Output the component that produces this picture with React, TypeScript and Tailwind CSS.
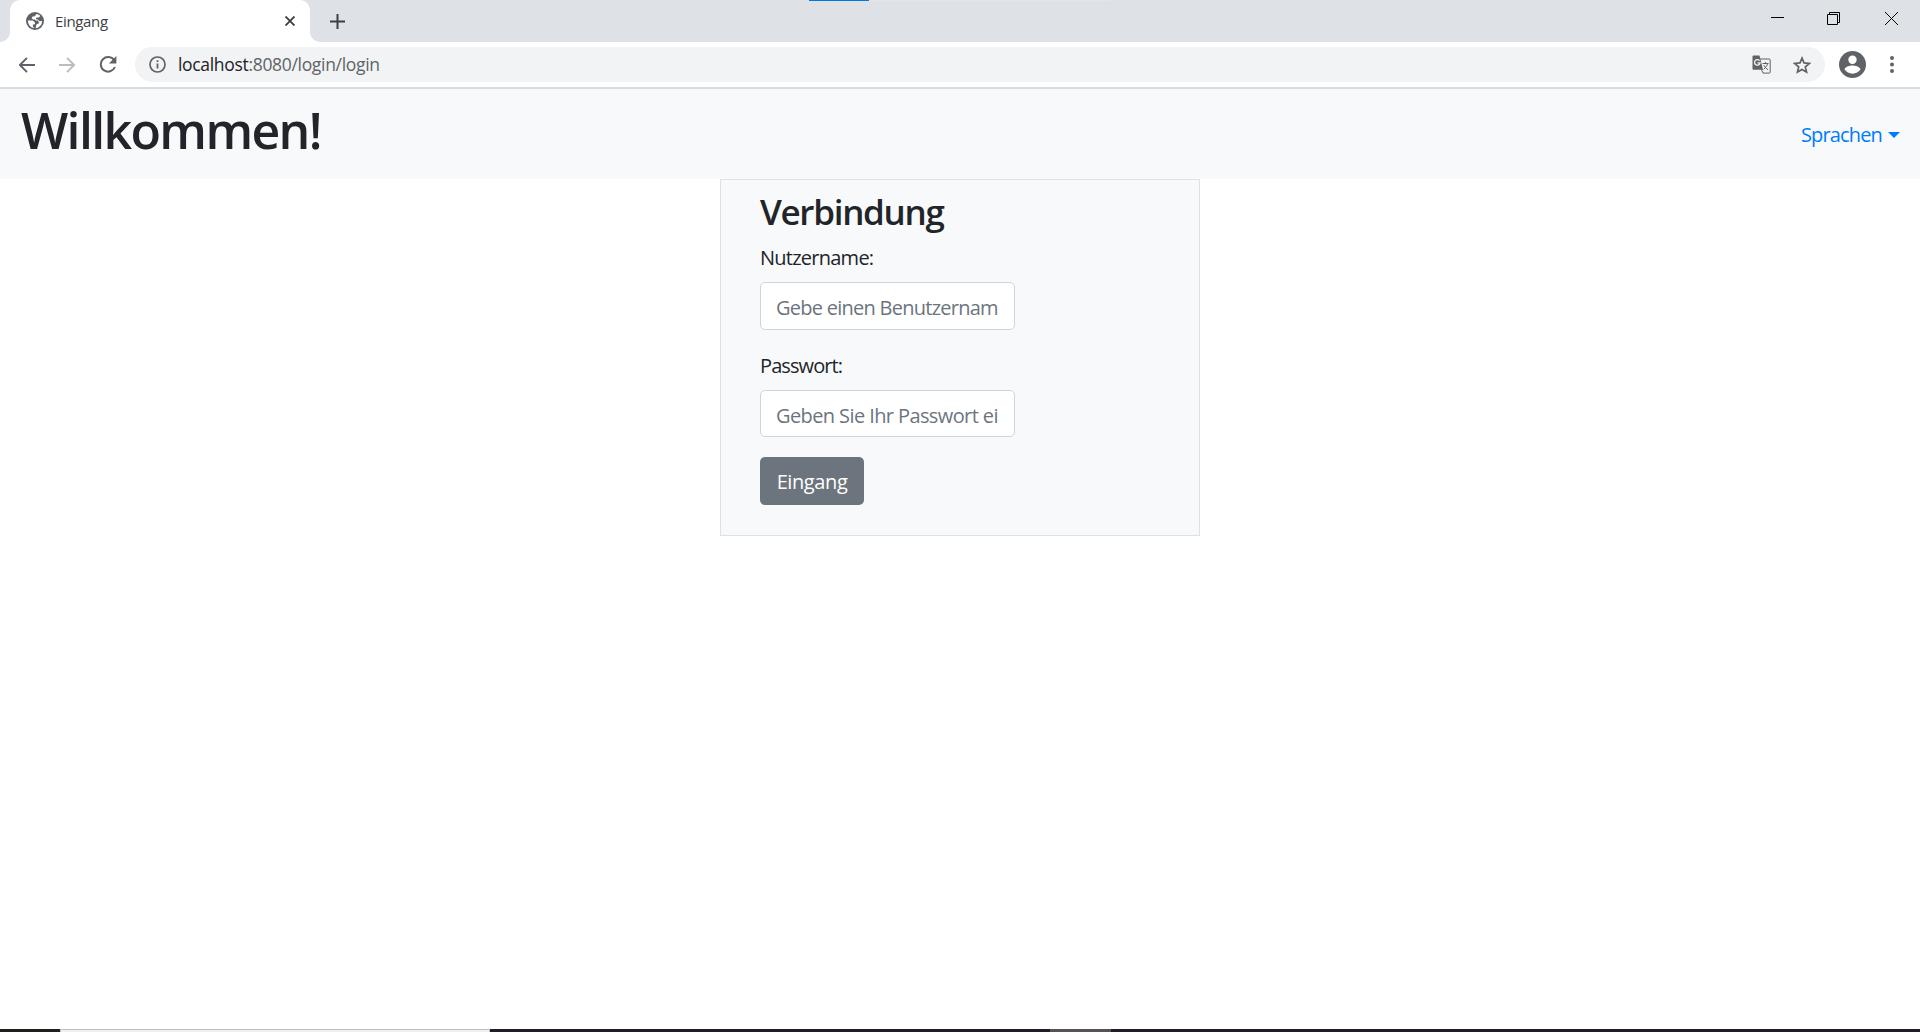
import React from "react";

const FONT = "font-['Open_Sans','Noto_Sans',sans-serif]";

function TabStrip() {
  return (
    <div className="relative flex h-[42px] bg-[#dee1e6]">
      <div className="flex w-[10px] bg-white">
        <div className="h-full w-[10px] rounded-br-[10px] bg-[#dee1e6]" />
      </div>
      <div className="flex w-[300px] items-center rounded-t-[10px] bg-white pl-4 pr-[15px]">
        <svg className="size-[18px]" viewBox="0 0 18 18">
          <circle cx="9" cy="9" r="9" fill="#5f6368" />
          <path d="M10.300 1.900 8.900 4.300 6.600 4.600 5.700 6.300 7 7.400h1.900l.7 1.200h2.200l1.100 1.500-.2 1.500-2 .7-.7 1.600-.3 2.300A7.200 7.200 0 0 0 16.100 9l-2.600.2-1.700-1.800-1.900-.2.300-1.500 3-.4 1.100-1.600A7.200 7.200 0 0 0 10.300 1.900Z" fill="#fff" />
          <path d="M1.900 8.600h4.700l2.300 1.600v2l-2 .3v2.100l1.500 1.500A7.200 7.200 0 0 1 1.900 8.600Z" fill="#fff" />
        </svg>
        <span className="-mt-px ml-[11px] flex-1 text-[15px] leading-5 tracking-[-0.35px] text-[#3c4043]">Eingang</span>
        <svg className="size-[10px]" viewBox="0 0 10 10" stroke="#3c4043" strokeWidth="1.9">
          <path d="M.5.5 9.5 9.5M9.5.5.5 9.5" />
        </svg>
      </div>
      <div className="flex flex-1 items-center justify-between bg-white">
        <div className="flex h-full flex-1 items-center rounded-bl-[10px] bg-[#dee1e6] pl-5">
          <svg className="size-[15px]" viewBox="0 0 15 15" stroke="#3c4043" strokeWidth="2">
            <path d="M7.5 0v15M0 7.5h15" />
          </svg>
          <div className="ml-auto flex h-[37px] items-center self-start pr-[22px]">
            <svg className="h-[13px] w-[13px]" viewBox="0 0 13 13" stroke="#000"><path d="M0 5.5h13" /></svg>
            <svg className="ml-[43px] size-[13px]" viewBox="0 0 13 13" fill="none" stroke="#000">
              <path d="M.5 2.5h10v10H.5zM2.5 2.5v-2h10v10h-2" />
            </svg>
            <svg className="ml-[45px] size-[13px]" viewBox="0 0 13 13" stroke="#000"><path d="m0 0 13 13M13 0 0 13" /></svg>
          </div>
        </div>
      </div>
      <div className="absolute left-[809px] top-0 flex h-px w-[301px] bg-[#e5e5e5]">
        <div className="w-[60px] bg-[#0078d7]" />
      </div>
    </div>
  );
}

function Toolbar() {
  return (
    <div className="flex h-[47px] items-center border-b-2 border-[#d9dbdf] bg-white pl-[19px] pr-[26px]">
      <svg className="size-4" viewBox="0 0 16 16" fill="none" stroke="#5f6368" strokeWidth="1.9"><path d="M16 8H1.5M8 .9.9 8 8 15.1" /></svg>
      <svg className="ml-6 size-4" viewBox="0 0 16 16" fill="none" stroke="#babcbe" strokeWidth="1.9"><path d="M0 8h14.5M8 .9 15.1 8 8 15.1" /></svg>
      <svg className="ml-6 size-[18px]" viewBox="0 0 18 18" fill="none">
        <path d="M15.2 4.3A7.3 7.3 0 1 0 15.9 11" stroke="#5f6368" strokeWidth="2" />
        <path d="M17.4 0v7.5H9.9Z" fill="#5f6368" />
      </svg>
      <div className="ml-[18px] flex h-[35px] flex-1 items-center rounded-full bg-[#f1f3f4] pl-[14px] pr-[14px]">
        <svg className="size-[17px]" viewBox="0 0 17 17" fill="none" stroke="#5f6368">
          <circle cx="8.5" cy="8.5" r="7.5" strokeWidth="1.7" />
          <path d="M8.5 7.6v5M8.5 4.2v1.9" strokeWidth="1.8" />
        </svg>
        <span className="-mt-px ml-3 flex-1 text-[17.5px] leading-6 tracking-[-0.32px] text-[#5f6368]"><span className="text-[#202124]">localhost</span>:8080/login/login</span>
        <svg className="size-[19px]" viewBox="0 0 19 19">
          <path d="M8 4h9.3c.5 0 .9.4.9.9v12.3c0 .5-.4.9-.9.9H11L9.3 14" fill="#f1f3f4" stroke="#5f6368" strokeWidth="1" />
          <path d="M1.500.5h6L11 14.700H1.500A1 1 0 0 1 .5 13.700V1.500A1 1 0 0 1 1.500.5Z" fill="#5f6368" />
          <path d="M7.600 5.700A2.800 2.800 0 1 0 8.100 7.900H5.500" fill="none" stroke="#f1f3f4" strokeWidth="1.300" />
          <path d="M10.500 8.500h6M13.400 7v1.500M15.600 8.500c-.5 2.500-2 4.300-4 5.700M11.700 10c1 2 2.500 3.500 4.300 4.800" fill="none" stroke="#5f6368" />
        </svg>
        <svg className="ml-[22px] size-[18px]" viewBox="0 0 18 18" fill="none" stroke="#5f6368" strokeWidth="1.700">
          <path d="m9 2.200 2 4.700 5.400.5-4.100 3.500 1.250 5.200L9 13.400l-4.550 2.700 1.250-5.200L1.600 7.400l5.400-.5Z" />
        </svg>
      </div>
      <svg className="ml-[14px] size-[27px]" viewBox="0 0 27 27">
        <circle cx="13.500" cy="13.500" r="13.500" fill="#5f6368" />
        <circle cx="13.500" cy="8.700" r="4.200" fill="#fff" />
        <path d="M5.400 18.300c1.500-2.700 5.500-3.700 8.100-3.700s6.600 1 8.100 3.700a9.700 9.700 0 0 1-16.200 0Z" fill="#fff" />
      </svg>
      <svg className="ml-[24px] h-[17px] w-1" viewBox="0 0 4 17" fill="#5f6368">
        <circle cx="2" cy="2" r="2" /><circle cx="2" cy="8.500" r="2" /><circle cx="2" cy="15" r="2" />
      </svg>
    </div>
  );
}

export default function App() {
  return (
    <div className={`flex h-[1032px] w-[1920px] flex-col overflow-hidden bg-white text-[20px] text-[#212529] ${FONT}`}>
      <TabStrip />
      <Toolbar />
      <header className="flex h-[90px] justify-between bg-[#f8f9fa] px-5">
        <h1 className="mt-[11px] pl-px text-[50px] font-semibold leading-[60px] tracking-[-1.65px]">Willkommen!</h1>
        <button className="mt-[31px] flex h-[30px] items-center leading-[30px] tracking-[-0.85px] text-[#007bff]">
          Sprachen
          <span className="-mt-px ml-[6px] border-x-[6px] border-t-[6px] border-x-transparent border-t-[#007bff]" />
        </button>
      </header>
      <main className="flex flex-1 items-start justify-center">
        <form className="flex h-[357px] w-[480px] flex-col items-start border border-[#dee2e6] bg-[#f8f9fa] pl-[39px]">
          <h2 className="mt-[11px] text-[35px] font-semibold leading-[42px] tracking-[-1.3px]">Verbindung</h2>
          <label className="mt-[10px] leading-[30px] tracking-[-0.75px]">Nutzername:</label>
          <input className="mt-[9px] h-12 w-[255px] rounded-[5px] border border-[#ced4da] bg-white px-[15px] pt-[3px] tracking-[-0.74px] placeholder:text-[#6c757d]" placeholder="Gebe einen Benutzernam" />
          <label className="mt-[21px] leading-[30px] tracking-[-0.9px]">Passwort:</label>
          <input className="mt-[9px] h-[47px] w-[255px] rounded-[5px] border border-[#ced4da] bg-white px-[15px] pt-[3px] tracking-[-0.6px] placeholder:text-[#6c757d]" placeholder="Geben Sie Ihr Passwort ei" />
          <button className="mt-5 h-12 w-[104px] rounded-[5px] bg-[#6c757d] pt-[2px] tracking-[-0.4px] text-white">Eingang</button>
        </form>
      </main>
      <div className="flex h-[3px] bg-[#211e28]">
        <div className="w-[60px] bg-[#20211f]" />
        <div className="mr-[560px] w-[430px] border-x border-t border-[#bfbfbf] bg-[#f0f0f0]" />
        <div className="w-[61px] bg-[#555357]" />
      </div>
    </div>
  );
}
